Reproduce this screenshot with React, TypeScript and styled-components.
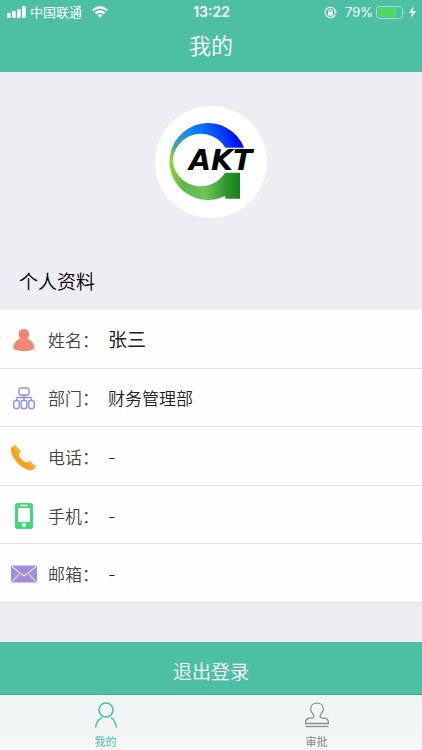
import React from "react";
import styled, { createGlobalStyle } from "styled-components";

const GREEN = "#4dbfa5";
const CJK = '"Noto Sans CJK SC", sans-serif';

const GlobalStyle = createGlobalStyle`
  * { box-sizing: border-box; }
  body { margin: 0; background: #eeedf3; font-family: ${CJK}; }
`;

const Page = styled.div`
  display: flex;
  flex-direction: column;
  min-height: 100vh;
`;

const Header = styled.header`
  background: ${GREEN};
  color: #fff;
  padding-bottom: 8px;
`;

const StatusBar = styled.div`
  display: grid;
  grid-template-columns: 1fr auto 1fr;
  align-items: center;
  height: 24px;
  padding: 0 6px 0 7px;
  font-size: 14px;
  line-height: 24px;
`;

const StatusGroup = styled.div<{ $end?: boolean }>`
  display: flex;
  align-items: center;
  justify-content: ${(p) => (p.$end ? "flex-end" : "flex-start")};
  gap: ${(p) => (p.$end ? 3 : 4)}px;
`;

const Carrier = styled.span`
  font-size: 13px;
  line-height: 24px;
`;

const Latin = styled.span<{ $bold?: boolean }>`
  font-family: Inter, sans-serif;
  font-size: ${(p) => (p.$bold ? 14 : 13)}px;
  font-weight: ${(p) => (p.$bold ? 600 : 400)};
`;

const WifiIcon = styled.svg`
  margin-left: 6px;
`;

const LockIcon = styled.svg`
  margin-right: 5px;
`;

const Title = styled.h1`
  margin: 0;
  font-size: 22px;
  line-height: 40px;
  font-weight: 350;
  text-align: center;
`;

const Avatar = styled.div`
  align-self: center;
  margin-top: 34px;
  width: 112px;
  height: 112px;
  border-radius: 50%;
  background: #fff;
  overflow: hidden;
`;

const SectionTitle = styled.h2`
  margin: 48px 0 14px 19px;
  font-size: 19px;
  line-height: 30px;
  font-weight: 350;
  color: #000;
`;

const List = styled.dl`
  display: grid;
  grid-auto-rows: 1fr;
  margin: 0;
  min-height: 293px;
  background: #fefefe;
`;

const Row = styled.div`
  display: flex;
  align-items: center;
  padding: 2px 10px 0;
  border-bottom: 1px solid #dfdfe3;
`;

const RowIcon = styled.svg`
  flex: none;
  width: 28px;
  height: 28px;
`;

const Label = styled.dt`
  width: 60px;
  margin-left: 10px;
  font-size: 17px;
  line-height: 28px;
  font-weight: 350;
  color: #444;
  white-space: nowrap;
`;

const Value = styled.dd<{ $strong?: boolean }>`
  margin: 0;
  padding-top: 2px;
  font-family: Inter, ${CJK};
  font-size: ${(p) => (p.$strong ? 19 : 17)}px;
  line-height: 28px;
  font-weight: ${(p) => (p.$strong ? 400 : 350)};
  color: #222;
`;

const Logout = styled.button`
  margin-top: 39px;
  height: 53px;
  border: 0;
  border-bottom: 1px solid #46ab95;
  padding: 6px 0 0;
  background: ${GREEN};
  color: #fff;
  font-family: ${CJK};
  font-size: 19px;
  line-height: 30px;
  font-weight: 350;
`;

const TabBar = styled.nav`
  display: grid;
  grid-template-columns: 1fr 1fr;
  flex: 1;
  min-height: 55px;
  background: linear-gradient(#eef4f5, #f6f7f8);
`;

const Tab = styled.a<{ $active?: boolean }>`
  display: flex;
  flex-direction: column;
  align-items: center;
  padding-top: 7px;
  color: ${(p) => (p.$active ? GREEN : "#858585")};
  text-decoration: none;
  font-size: 11px;
  line-height: 16px;
`;

const TabIcon = styled.svg`
  width: 26px;
  height: 26px;
  margin-bottom: 5px;
  fill: none;
`;

const Logo = () => (
  <svg width="112" height="112" viewBox="30 30 336 336" role="img" aria-label="AKT">
    <defs>
      <linearGradient id="blue" gradientUnits="userSpaceOnUse" x1="80" y1="190" x2="280" y2="110">
        <stop offset="0" stopColor="#8fd33a" />
        <stop offset="0.13" stopColor="#3a9fb0" />
        <stop offset="0.42" stopColor="#0a86f5" />
        <stop offset="0.72" stopColor="#0550ff" />
        <stop offset="1" stopColor="#0000fa" />
      </linearGradient>
      <linearGradient id="green" gradientUnits="userSpaceOnUse" x1="73" y1="0" x2="285" y2="0">
        <stop offset="0" stopColor="#8fd633" />
        <stop offset="0.2" stopColor="#5ab84a" />
        <stop offset="0.5" stopColor="#70c65c" />
        <stop offset="0.8" stopColor="#31962e" />
        <stop offset="1" stopColor="#178019" />
      </linearGradient>
    </defs>
    <path d="M73 197A116 116 0 0 1 297 155H241A85 85 0 0 0 83 197Z" fill="url(#blue)" />
    <path d="M73 196A116 116 0 0 0 240 300L242 308H285V230H240A85 85 0 0 1 83 196Z" fill="url(#green)" />
    <text x="227" y="222" textAnchor="middle" fontFamily="DejaVu Sans, sans-serif" fontWeight="700" fontStyle="italic" fontSize="85" fill="#050505">AKT</text>
  </svg>
);

const PersonIcon = () => (
  <RowIcon viewBox="0 0 28 28" fill="#f28672" aria-hidden="true">
    <path d="M14 3C10.700 3 8.500 5.300 8.600 8.400C8.700 10.200 9.400 11.500 10.400 12.400C6.500 13.800 3.500 17 3.300 21.500C3.200 23.500 7.500 25 14 25S24.500 23.500 24.300 21.500C24 17 21 13.800 17.300 12.400C18.400 11.500 19.200 10.200 19.200 8.400C19.300 5.300 17 3 14 3Z" />
  </RowIcon>
);

const DepartmentIcon = () => (
  <RowIcon viewBox="0 0 28 28" fill="none" stroke="#8e91ee" strokeWidth="1.400" aria-hidden="true">
    <rect x="9" y="4" width="10" height="7" rx="2" />
    <path d="M14 11V16M6.500 16V15Q6.500 13.500 8 13.500H20Q21.500 13.500 21.500 15V16" />
    <rect x="3.700" y="16.500" width="5.600" height="8" rx="2" />
    <rect x="11.200" y="16.500" width="5.600" height="8" rx="2" />
    <rect x="18.700" y="16.500" width="5.600" height="8" rx="2" />
  </RowIcon>
);

const PhoneIcon = () => (
  <RowIcon viewBox="0 0 28 28" aria-hidden="true">
    <path d="M1 5.500C0.400 9.500 3 15.500 8 20.500C13 25.200 18.500 28 22 27C23.500 26.500 25 25.200 26 24L20 18C18.500 18 17.500 19.500 16 19.500C13.500 18.500 9.500 14.500 8.800 12.200C8.800 10.700 10.500 10 10.800 8.500L5 2C3.300 2.700 1.300 4 1 5.500Z" fill="#f9a11b" />
    <path d="M3.500 3L9.600 9.800M18.500 18.600L25.200 25.300" stroke="#fff3dd" strokeWidth="0.600" />
  </RowIcon>
);

const MobileIcon = () => (
  <RowIcon viewBox="0 0 28 28" aria-hidden="true">
    <rect x="5" y="1" width="18" height="26" rx="3" fill="#45d67d" />
    <rect x="8" y="6" width="12" height="14" fill="#fff" />
    <path d="M11 3.500H17" stroke="#fff" strokeWidth="1.400" strokeLinecap="round" />
    <circle cx="14" cy="23" r="2" fill="#fff" />
  </RowIcon>
);

const MailIcon = () => (
  <RowIcon viewBox="0 0 28 28" aria-hidden="true">
    <rect x="1" y="5.500" width="26" height="17" rx="1.500" fill="#a08fdf" />
    <path d="M2 6.500L12.500 15Q14 16.300 15.500 15L26 6.500M2 21.500L9.800 13.500M26 21.500L18.200 13.500" fill="none" stroke="#fff" strokeWidth="1" />
  </RowIcon>
);

const fields = [
  { label: "姓名", value: "张三", Icon: PersonIcon, strong: true },
  { label: "部门", value: "财务管理部", Icon: DepartmentIcon },
  { label: "电话", value: "-", Icon: PhoneIcon },
  { label: "手机", value: "-", Icon: MobileIcon },
  { label: "邮箱", value: "-", Icon: MailIcon },
];

export default function App() {
  return (
    <Page lang="zh-CN">
      <GlobalStyle />
      <Header>
        <StatusBar>
          <StatusGroup>
            <svg width="19" height="12" viewBox="0 0 19 12" fill="#fff" aria-hidden="true">
              <rect x="0" y="7" width="3.700" height="5" rx="1" />
              <rect x="5" y="5" width="3.700" height="7" rx="1" />
              <rect x="10" y="3" width="3.700" height="9" rx="1" />
              <rect x="15" y="0" width="3.700" height="12" rx="1" />
            </svg>
            <Carrier>中国联通</Carrier>
            <WifiIcon width="16" height="12" viewBox="0 0 16 12" fill="none" stroke="#fff" strokeWidth="2.300" aria-hidden="true">
              <path d="M1 4.400Q8 -2 15 4.400M3.600 7.500Q8 3.500 12.400 7.500" />
              <path d="M8 11.700L5.500 9.200Q8 7.200 10.500 9.200Z" fill="#fff" stroke="none" />
            </WifiIcon>
          </StatusGroup>
          <Latin $bold>13:22</Latin>
          <StatusGroup $end>
            <LockIcon width="13" height="13" viewBox="0 0 13 13" aria-hidden="true">
              <path d="M11.200 8.500A5.200 5.200 0 1 1 11.500 5.500" fill="none" stroke="#fff" strokeWidth="1.200" />
              <path d="M9.800 5.500H13L11.500 7.800Z" fill="#fff" />
              <rect x="4" y="5.700" width="5" height="3.800" rx="0.500" fill="#fff" />
              <path d="M5 6V4.700A1.500 1.500 0 0 1 8 4.700V6" fill="none" stroke="#fff" />
            </LockIcon>
            <Latin>79%</Latin>
            <svg width="30" height="13" viewBox="0 0 30 13" aria-hidden="true">
              <rect x="0.500" y="0.500" width="26" height="12" rx="3" fill="none" stroke="#a5dfd2" />
              <rect x="2" y="2" width="18.500" height="9" rx="1.500" fill="#4cd964" />
              <path d="M28 4.500Q29.500 6.500 28 8.500Z" fill="#a5dfd2" />
            </svg>
            <svg width="7" height="12" viewBox="0 0 7 12" fill="#fff" aria-hidden="true">
              <path d="M4.500 0L0 6.800H3L2 12L7 4.900H3.800Z" />
            </svg>
          </StatusGroup>
        </StatusBar>
        <Title>我的</Title>
      </Header>
      <Avatar>
        <Logo />
      </Avatar>
      <SectionTitle>个人资料</SectionTitle>
      <List>
        {fields.map(({ label, value, Icon, strong }) => (
          <Row key={label}>
            <Icon />
            <Label>{label}：</Label>
            <Value $strong={strong}>{value}</Value>
          </Row>
        ))}
      </List>
      <Logout type="button">退出登录</Logout>
      <TabBar>
        <Tab href="#me" $active>
          <TabIcon viewBox="0 0 26 26" stroke={GREEN} strokeWidth="1.600" aria-hidden="true">
            <circle cx="13" cy="8" r="7" />
            <path d="M2.500 25.500Q3.500 18.500 9 15.600M18 15.600Q22.500 18.500 23.500 25.500" />
          </TabIcon>
          我的
        </Tab>
        <Tab href="#approval">
          <TabIcon viewBox="0 0 26 26" stroke="#8b8e90" strokeWidth="1.300" aria-hidden="true">
            <path d="M10 14.500C10.500 12.500 6.600 10.500 6.600 7.200C6.600 3.500 9.500 1.200 13 1.200S19.400 3.500 19.400 7.200C19.400 10.500 15.500 12.500 16 14.500C16.200 16 18 16.200 20 16.200C23 16.200 24.500 17.500 24.500 21.500H1.500C1.500 17.500 3 16.200 6 16.200C8 16.200 9.800 16 10 14.500Z" />
            <path d="M1.500 24.500H24.500" />
          </TabIcon>
          审批
        </Tab>
      </TabBar>
    </Page>
  );
}
